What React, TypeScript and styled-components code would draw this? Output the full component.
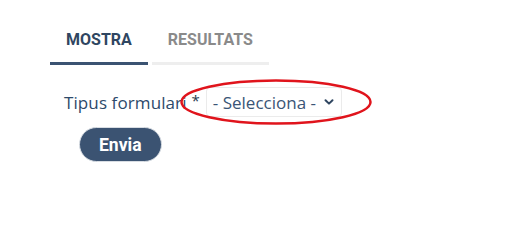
import { useState } from "react";
import styled, { createGlobalStyle } from "styled-components";

const GlobalStyle = createGlobalStyle`
  body {
    margin: 0;
    background: #ffffff;
    font-family: "Open Sans", "Noto Sans", sans-serif;
  }
`;

const Page = styled.div`
  padding: 18px 0 0 50px;
`;

const Tabs = styled.div`
  display: flex;
  gap: 4px;
`;

const Tab = styled.button<{ $active?: boolean }>`
  background: none;
  border: none;
  border-bottom: 3px solid ${(p) => (p.$active ? "#3b5372" : "#eeeeee")};
  padding: 12px 16px;
  margin: 0;
  line-height: 20px;
  font-family: Roboto, "Liberation Sans", sans-serif;
  font-weight: 700;
  font-size: 16px;
  color: ${(p) => (p.$active ? "#2f4661" : "#8a8a8a")};
  cursor: pointer;
`;

const Form = styled.div`
  padding: 22px 0 0 14px;
`;

const Row = styled.div`
  display: flex;
  align-items: center;
  height: 30px;
`;

const Label = styled.label`
  font-size: 17px;
  color: #2d4a6b;
  letter-spacing: 0.1px;
`;

const Required = styled.span`
  font-size: 15px;
  color: #2a3b50;
  margin: 0 6px 0 5px;
  align-self: flex-start;
  padding-top: 3px;
`;

const SelectWrap = styled.div`
  position: relative;
`;

const SelectBox = styled.div`
  display: flex;
  align-items: center;
  gap: 8px;
  height: 30px;
  box-sizing: border-box;
  padding: 0 7px 0 6px;
  border: 1px solid #ebebeb;
  border-radius: 4px;
  font-size: 17px;
  color: #3a5576;
  cursor: pointer;
`;

const Highlight = styled.svg`
  position: absolute;
  left: -26px;
  top: -8px;
  pointer-events: none;
  overflow: visible;
`;

const Submit = styled.button`
  margin: 10px 0 0 15px;
  height: 35px;
  padding: 0 19px;
  border-radius: 18px;
  border: 1px solid #d8dde3;
  background: #3b5372;
  color: #ffffff;
  font-family: Roboto, "Liberation Sans", sans-serif;
  font-weight: 700;
  font-size: 17.5px;
  cursor: pointer;
`;

function Chevron() {
  return (
    <svg width="10" height="8" viewBox="0 0 10 8">
      <path
        d="M1.5 2.2 L5 5.6 L8.5 2.2"
        fill="none"
        stroke="#2f4661"
        strokeWidth="2"
        strokeLinecap="round"
        strokeLinejoin="round"
      />
    </svg>
  );
}

export default function App() {
  const [tab, setTab] = useState("mostra");

  return (
    <>
      <GlobalStyle />
      <Page>
        <Tabs>
          <Tab $active={tab === "mostra"} onClick={() => setTab("mostra")}>
            MOSTRA
          </Tab>
          <Tab $active={tab === "resultats"} onClick={() => setTab("resultats")}>
            RESULTATS
          </Tab>
        </Tabs>
        <Form>
          <Row>
            <Label>Tipus formulari</Label>
            <Required>*</Required>
            <SelectWrap>
              <SelectBox>
                <span>- Selecciona -</span>
                <Chevron />
              </SelectBox>
              <Highlight width="192" height="46" viewBox="0 0 192 46">
                <ellipse
                  cx="96"
                  cy="23"
                  rx="94.5"
                  ry="21.5"
                  fill="none"
                  stroke="#e0141c"
                  strokeWidth="2.5"
                />
              </Highlight>
            </SelectWrap>
          </Row>
          <Submit>Envia</Submit>
        </Form>
      </Page>
    </>
  );
}
